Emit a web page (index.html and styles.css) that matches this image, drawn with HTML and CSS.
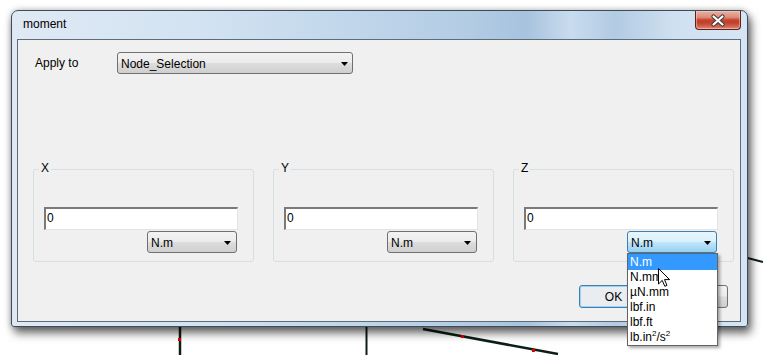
FILE: index.html
```html
<!DOCTYPE html>
<html>
<head>
<meta charset="utf-8">
<title>moment</title>
<link rel="stylesheet" href="styles.css">
</head>
<body>
<svg class="desk" width="763" height="355" viewBox="0 0 763 355">
  <line x1="180" y1="320" x2="180" y2="355" stroke="#0c1f14" stroke-width="2.5"/>
  <rect x="178" y="338" width="3" height="3" fill="#e00000"/>
  <line x1="366.5" y1="320" x2="366.5" y2="355" stroke="#0c1f14" stroke-width="2"/>
  <line x1="423" y1="329" x2="558" y2="354" stroke="#0c1f14" stroke-width="2.5"/>
  <rect x="461" y="335" width="3" height="3" fill="#e00000"/>
  <rect x="532" y="349" width="3" height="3" fill="#e00000"/>
  <line x1="740" y1="256" x2="763" y2="262" stroke="#0c1f14" stroke-width="2"/>
</svg>

<div class="window">
  <div class="titlebar">
    <span class="title">moment</span>
    <div class="close">
      <svg width="46" height="19" viewBox="0 0 46 19">
        <path d="M18.5 5.5 L27.5 13.5 M27.5 5.5 L18.5 13.5" stroke="#3b3b3b" stroke-width="4.2" stroke-linecap="round"/>
        <path d="M18.5 5.5 L27.5 13.5 M27.5 5.5 L18.5 13.5" stroke="#ffffff" stroke-width="2.2" stroke-linecap="round"/>
      </svg>
    </div>
  </div>
  <div class="client">
    <div class="apply-row">
      <span class="apply-label">Apply to</span>
      <div class="combo combo-wide"><span>Node_Selection</span><i class="arrow"></i></div>
    </div>
    <div class="groups">
      <div class="group">
        <span class="legend">X</span>
        <div class="input">0</div>
        <div class="combo combo-unit"><span>N.m</span><i class="arrow"></i></div>
      </div>
      <div class="group">
        <span class="legend">Y</span>
        <div class="input">0</div>
        <div class="combo combo-unit"><span>N.m</span><i class="arrow"></i></div>
      </div>
      <div class="group">
        <span class="legend">Z</span>
        <div class="input">0</div>
        <div class="combo combo-unit combo-open"><span>N.m</span><i class="arrow"></i>
          <ul class="dropdown">
            <li class="selected">N.m</li>
            <li>N.mm</li>
            <li>µN.mm</li>
            <li>lbf.in</li>
            <li>lbf.ft</li>
            <li>lb.in<sup>2</sup>/s<sup>2</sup></li>
          </ul>
        </div>
      </div>
    </div>
    <div class="buttons">
      <div class="btn btn-default">OK</div>
      <div class="btn">Cancel</div>
    </div>
  </div>
</div>

<svg class="cursor" width="13" height="20" viewBox="0 0 13 20">
  <path d="M0.5 0.5 L0.5 16 L4.2 12.4 L6.8 18.3 L9 17.4 L6.5 11.6 L11.6 11.6 Z" fill="#ffffff" stroke="#000000" stroke-width="1" stroke-linejoin="miter"/>
</svg>
</body>
</html>
```

FILE: styles.css
```css
html, body {
  margin: 0;
  padding: 0;
}

body {
  width: 763px;
  height: 355px;
  overflow: hidden;
  position: relative;
  background: #ffffff;
  font-family: "Liberation Sans", Arial, sans-serif;
  font-size: 12px;
  color: #000000;
}

.desk {
  position: absolute;
  left: 0;
  top: 0;
}

.window {
  position: absolute;
  left: 11px;
  top: 10px;
  width: 737px;
  height: 317px;
  box-sizing: border-box;
  border: 1px solid #3d4b5a;
  border-radius: 7px 7px 3px 3px;
  padding: 0 6px 4px 5px;
  display: flex;
  flex-direction: column;
  background:
    linear-gradient(90deg, #dfe9f4 0%, #d3e3f2 25%, #c2d7eb 45%, #b3cce4 62%, #a7c3de 70%, #c9dcee 76%, #b2cbe3 82%, #cfe0f0 90%, #d6e5f4 100%);
  box-shadow: 3px 6px 10px rgba(0, 0, 0, 0.6), 0 0 6px rgba(0, 0, 0, 0.25);
}

.titlebar {
  position: relative;
  height: 28px;
  flex: none;
}

.title {
  position: absolute;
  left: 6px;
  top: 6px;
  line-height: 14px;
  font-size: 12px;
  color: #000000;
}

.close {
  position: absolute;
  right: 0;
  top: 0;
  width: 46px;
  height: 19px;
  box-sizing: border-box;
  border: 1px solid #5a2319;
  border-top: none;
  border-radius: 0 0 4px 4px;
  background: linear-gradient(180deg, #eab1a3 0%, #dd8c77 35%, #c4432d 50%, #c0402b 65%, #d26350 85%, #e08e7c 100%);
  box-shadow: inset 0 0 0 1px rgba(255, 220, 210, 0.45);
}

.close svg {
  position: absolute;
  left: -1px;
  top: 0;
}

.client {
  flex: 1;
  box-sizing: border-box;
  border: 1px solid #5e6b78;
  background: #f0f0f0;
  display: flex;
  flex-direction: column;
}

.apply-row {
  display: flex;
  align-items: center;
  margin-top: 12px;
  padding-left: 17px;
}

.apply-label {
  width: 82px;
}

.combo {
  position: relative;
  box-sizing: border-box;
  height: 22px;
  border: 1px solid #707070;
  border-radius: 3px;
  background: linear-gradient(180deg, #f3f3f3 0%, #ebebeb 48%, #dddddd 52%, #cfcfcf 100%);
  display: flex;
  align-items: center;
  justify-content: space-between;
  padding: 1px 4px 0 3px;
}

.combo-wide {
  width: 236px;
}

.combo-unit {
  width: 90px;
  align-self: flex-end;
  margin-right: 1px;
}

.combo-open {
  border-color: #3c7fb1;
  background: linear-gradient(180deg, #eaf6fd 0%, #d9f0fc 48%, #bee6fd 52%, #98d0ef 100%);
}

.arrow {
  display: block;
  width: 7px;
  height: 4px;
  background: #000000;
  clip-path: polygon(0 0, 100% 0, 50% 100%);
  margin-top: 1px;
}

.combo-unit .arrow {
  margin-right: 1px;
}

.groups {
  display: flex;
  gap: 19px;
  margin-top: 95px;
  padding-left: 15px;
}

.group {
  position: relative;
  box-sizing: border-box;
  width: 221px;
  height: 93px;
  border: 1px solid #d5dfe5;
  border-radius: 3px;
  padding: 37px 15px 8px 10px;
  display: flex;
  flex-direction: column;
  gap: 1px;
}

.legend {
  position: absolute;
  left: 5px;
  top: -9px;
  padding: 0 2px;
  line-height: 14px;
  background: #f0f0f0;
}

.input {
  box-sizing: border-box;
  height: 23px;
  width: 194px;
  background: #ffffff;
  border-style: solid;
  border-width: 2px 1px 1px 2px;
  border-color: #7a7a7a #e3e3e3 #e3e3e3 #7a7a7a;
  padding-left: 1px;
  line-height: 19px;
}

.dropdown {
  position: absolute;
  left: -1px;
  top: calc(100% + 1px);
  width: 91px;
  box-sizing: border-box;
  margin: 0;
  padding: 0;
  list-style: none;
  background: #ffffff;
  border: 1px solid #646464;
  box-shadow: 2px 2px 3px rgba(0, 0, 0, 0.35);
  z-index: 10;
}

.dropdown li {
  height: 15px;
  line-height: 15px;
  padding-left: 2px;
  white-space: nowrap;
}

.dropdown li.selected {
  background: #3399ff;
  color: #ffffff;
  height: 16px;
  line-height: 16px;
}

.dropdown sup {
  font-size: 8px;
  line-height: 0;
  vertical-align: 5px;
}

.buttons {
  display: flex;
  justify-content: flex-end;
  gap: 11px;
  margin-top: 23px;
  padding-right: 12px;
}

.btn {
  box-sizing: border-box;
  width: 69px;
  height: 23px;
  border: 1px solid #707070;
  border-radius: 3px;
  background: linear-gradient(180deg, #f3f3f3 0%, #ebebeb 48%, #dddddd 52%, #cfcfcf 100%);
  display: flex;
  align-items: center;
  justify-content: center;
}

.btn-default {
  border-color: #3c7fb1;
  background: #e9edf0;
  box-shadow: inset 0 0 0 1px #9ed3f1;
}

.cursor {
  position: absolute;
  left: 658px;
  top: 268px;
  z-index: 20;
}
```
